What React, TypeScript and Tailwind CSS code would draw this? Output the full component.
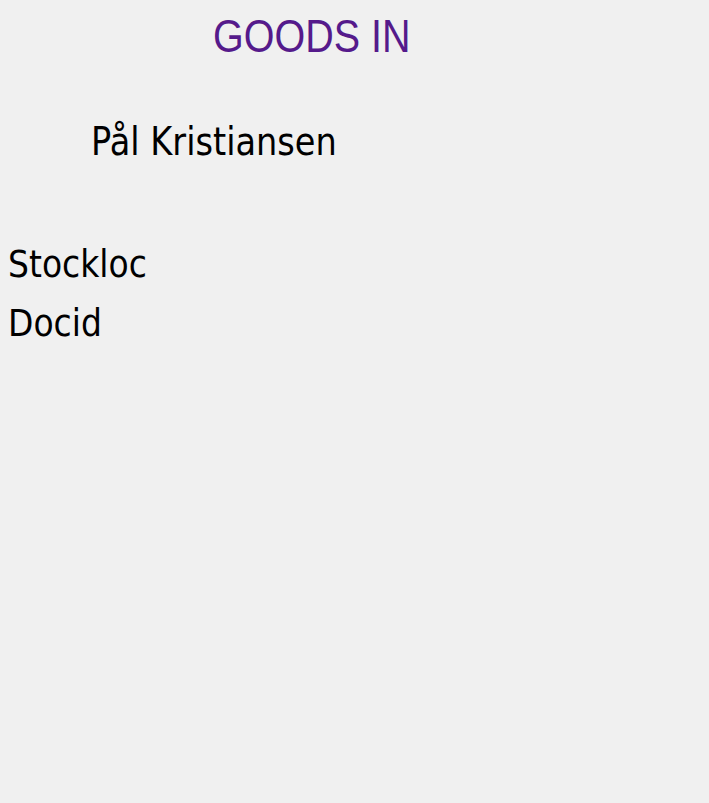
import React from 'react';

const App: React.FC = () => {
  return (
    <div className="min-h-[803px] w-full bg-[#f0f0f0] font-['DejaVu_Sans',sans-serif] text-black">
      <div className="flex flex-col pt-[20px]">
        {/* Title */}
        <div className="pl-[213px]">
          <h1 className="h-[39px] origin-bottom scale-y-[1.17] font-['Liberation_Sans',Arial,sans-serif] text-[39.5px] leading-none font-normal text-[#551a8b]">
            GOODS IN
          </h1>
        </div>

        {/* User */}
        <div className="mt-[70px] pl-[91px]">
          <p className="h-[32px] origin-bottom scale-y-[1.15] text-[33.6px] leading-[32px]">Pål Kristiansen</p>
        </div>

        {/* Fields */}
        <div className="mt-[90px] flex flex-col gap-[27px] pl-[8px]">
          <p className="h-[32px] origin-bottom scale-y-[1.15] text-[33px] leading-[32px]">Stockloc</p>
          <p className="h-[32px] origin-bottom scale-y-[1.15] text-[33px] leading-[32px]">Docid</p>
        </div>
      </div>
    </div>
  );
};

export default App;
